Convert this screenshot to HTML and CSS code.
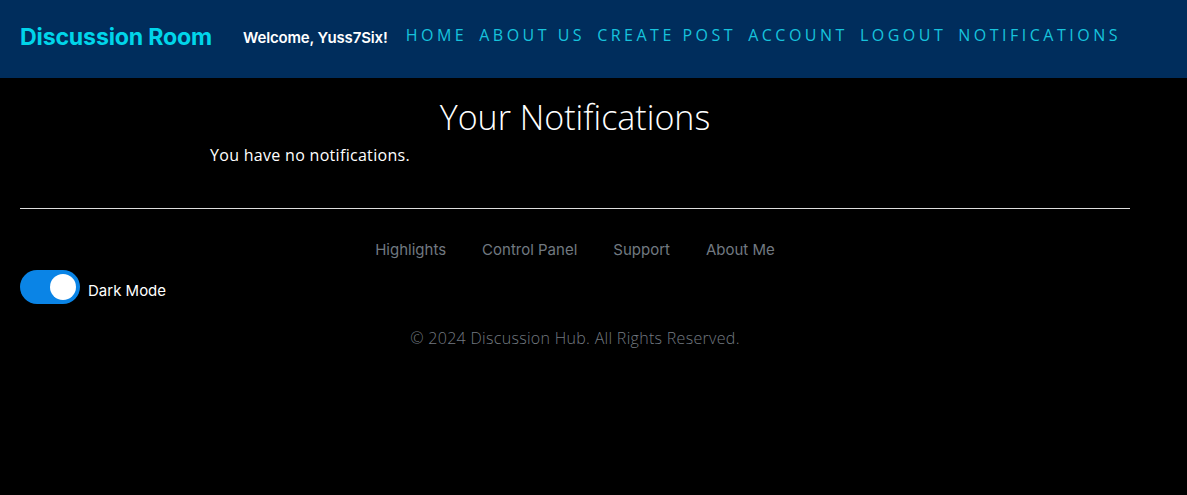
FILE: index.html
```html
<!DOCTYPE html>
<html lang="en">
<head>
<meta charset="utf-8">
<title>Notifications - Discussion Room</title>
<link rel="stylesheet" href="styles.css">
</head>
<body>
<header class="topbar">
  <a class="brand" href="#">Discussion Room</a>
  <span class="welcome">Welcome, Yuss7Six!</span>
  <nav class="nav">
    <a href="#">HOME</a>
    <a href="#">ABOUT US</a>
    <a href="#">CREATE POST</a>
    <a href="#">ACCOUNT</a>
    <a href="#">LOGOUT</a>
    <a href="#">NOTIFICATIONS</a>
  </nav>
</header>
<main class="main">
  <h1 class="title">Your Notifications</h1>
  <div class="list">
    <p class="empty">You have no notifications.</p>
  </div>
</main>
<footer class="footer">
  <div class="footer-links">
    <a href="#">Highlights</a>
    <a href="#">Control Panel</a>
    <a href="#">Support</a>
    <a href="#">About Me</a>
  </div>
  <label class="mode">
    <span class="switch"><span class="knob"></span></span>
    <span class="mode-label">Dark Mode</span>
  </label>
  <p class="copy">© 2024 Discussion Hub. All Rights Reserved.</p>
</footer>
</body>
</html>
```

FILE: styles.css
```css
html, body {
  margin: 0;
  padding: 0;
  background: #000;
  color: #fff;
  font-family: "Open Sans", "Noto Sans", sans-serif;
}
a { text-decoration: none; }

.topbar {
  height: 78px;
  background: #002d5c;
  display: flex;
  align-items: center;
  padding: 0 20px 6px;
  box-sizing: border-box;
}
.brand {
  font-family: Inter, "Liberation Sans", sans-serif;
  font-weight: 700;
  font-size: 23.2px;
  color: #00d5ea;
  letter-spacing: -0.2px;
  margin-top: 2px;
}
.welcome {
  font-family: Inter, "Liberation Sans", sans-serif;
  font-weight: 600;
  font-size: 15px;
  color: #fff;
  margin-left: 31px;
  letter-spacing: -0.15px;
  margin-top: 2px;
}
.nav {
  display: flex;
  gap: 12px;
  margin-left: 18px;
  margin-top: -3px;
}
.nav a {
  color: #17c3dc;
  font-family: "Open Sans", sans-serif;
  font-weight: 400;
  font-size: 16px;
  letter-spacing: 3.5px;
}

.main {
  width: 1110px;
  margin: 0 0 0 20px;
  padding-top: 18px;
  padding-bottom: 42px;
  border-bottom: 1px solid #ddd;
}
.title {
  margin: 0;
  text-align: center;
  font-family: "Open Sans", sans-serif;
  font-weight: 300;
  font-size: 34px;
  line-height: 42px;
}
.list {
  width: 730px;
  margin: 0 auto;
}
.empty {
  margin: 6px 0 0;
  font-size: 16px;
  font-weight: 400;
  letter-spacing: 0.3px;
  line-height: 22px;
}

.footer {
  width: 1110px;
  margin-left: 20px;
  padding-top: 30px;
}
.footer-links {
  display: flex;
  justify-content: center;
  gap: 36px;
}
.footer-links a {
  font-family: Inter, "Liberation Sans", sans-serif;
  font-size: 15px;
  color: #717980;
  line-height: 22px;
}
.mode {
  display: flex;
  align-items: center;
  gap: 8px;
  margin-top: 9px;
}
.switch {
  width: 60px;
  height: 34px;
  border-radius: 17px;
  background: #0a84e6;
  display: flex;
  align-items: center;
  justify-content: flex-end;
  padding: 0 4px;
  box-sizing: border-box;
}
.knob {
  width: 26px;
  height: 26px;
  border-radius: 50%;
  background: #fff;
}
.mode-label {
  font-family: Inter, "Liberation Sans", sans-serif;
  font-size: 15px;
  color: #fff;
  margin-top: 6px;
}
.copy {
  margin: 23px 0 0;
  text-align: center;
  font-size: 16px;
  font-weight: 300;
  letter-spacing: 0.3px;
  color: #737a81;
}
```
